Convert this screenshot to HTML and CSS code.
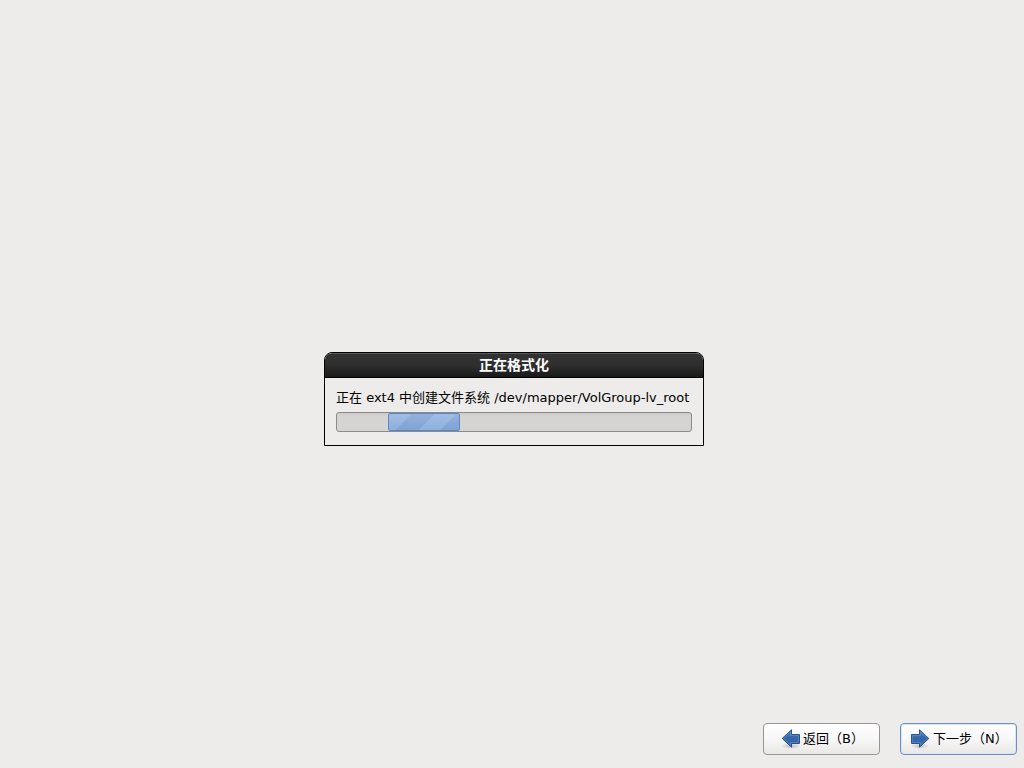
FILE: index.html
```html
<!DOCTYPE html>
<html lang="zh-CN">
<head>
<meta charset="utf-8">
<meta name="viewport" content="width=device-width, initial-scale=1">
<title>正在格式化</title>
<link rel="stylesheet" href="styles.css">
</head>
<body>
<main class="stage">
  <section class="dialog" role="dialog" aria-labelledby="dialog-title">
    <h1 class="dialog-title" id="dialog-title">正在格式化</h1>
    <div class="dialog-body">
      <p class="message" id="message">正在 ext4 中创建文件系统 /dev/mapper/VolGroup-lv_root</p>
      <div class="progress" role="progressbar" aria-labelledby="message"><div class="progress-block"></div></div>
    </div>
  </section>
</main>
<footer class="actions">
  <button class="button button-back" type="button">
    <svg class="icon" viewBox="0 0 20 20" aria-hidden="true">
      <defs>
        <linearGradient id="arrow-fill" x1="0" y1="0" x2="0" y2="1"><stop offset="0" stop-color="#5585bf"/><stop offset=".5" stop-color="#3465a4"/><stop offset="1" stop-color="#3c70b0"/></linearGradient>
        <radialGradient id="shadow"><stop offset="0" stop-color="#000" stop-opacity=".22"/><stop offset="1" stop-color="#000" stop-opacity="0"/></radialGradient>
      </defs>
      <ellipse cx="10" cy="17" rx="10" ry="3" fill="url(#shadow)"/>
      <path d="M1.200 9.500 10.500.800V5.500H18.500V14.500H10.500V18.200Z" fill="url(#arrow-fill)" stroke="#2a548f"/>
      <path d="M2.700 9.500 9.500 3.200V6.500H17.500V13.500H9.500V15.800Z" fill="none" stroke="#8db3de" stroke-opacity=".3"/>
    </svg>
    <span>返回（B）</span>
  </button>
  <button class="button button-next" type="button">
    <svg class="icon" viewBox="0 0 20 20" aria-hidden="true">
      <ellipse cx="9" cy="17" rx="9" ry="3" fill="url(#shadow)"/>
      <path d="M17.800 9.500 8.500.800V5.500H.500V14.500H8.500V18.200Z" fill="url(#arrow-fill)" stroke="#2a548f"/>
      <path d="M16.300 9.500 9.500 3.200V6.500H1.500V13.500H9.500V15.800Z" fill="none" stroke="#8db3de" stroke-opacity=".3"/>
    </svg>
    <span>下一步（N）</span>
  </button>
</footer>
</body>
</html>
```
FILE: styles.css
```css
* { box-sizing: border-box; }

body {
  margin: 0;
  min-height: 100vh;
  display: flex;
  flex-direction: column;
  background: #edeceb;
  color: #000;
  font: 13px/16px "DejaVu Sans", "Noto Sans CJK SC", sans-serif;
}

.stage {
  flex: 1;
  display: flex;
  align-items: center;
  justify-content: center;
  padding: 75px 0 0 4px;
}

.dialog {
  min-width: 380px;
  border: 1px solid #000;
  border-radius: 8px 8px 0 0;
  background: #edeceb;
  overflow: hidden;
}

.dialog-title {
  margin: 0;
  padding: 3px 0 4px;
  border-top: 1px solid #575757;
  border-bottom: 1px solid #000;
  background: linear-gradient(#333, #2e2e2e 50%, #191919);
  color: #fff;
  font-size: 14px;
  line-height: 16px;
  text-align: center;
}

.dialog-body { padding: 12px 11px 13px; }

.message {
  margin: 0 0 6px;
  white-space: nowrap;
}

.progress {
  height: 20px;
  padding-left: 51px;
  border: 1px solid #8b8a88;
  border-radius: 3px;
  background: linear-gradient(#cbcac8, #d5d4d2 3px);
}

.progress-block {
  width: 72px;
  height: 100%;
  border: 1px solid #5c87c0;
  border-radius: 2px;
  background:
    linear-gradient(rgba(255, 255, 255, .16), rgba(255, 255, 255, 0)),
    repeating-linear-gradient(135deg, #8eb0df 0 16px, #7fa3d5 16px 32px);
}

.actions {
  display: flex;
  justify-content: flex-end;
  gap: 20px;
  padding: 0 7px 13px;
}

.button {
  display: flex;
  align-items: center;
  width: 117px;
  height: 32px;
  gap: 2px;
  border: 1px solid #979694;
  border-radius: 4px;
  padding: 0 0 0 17px;
  background: linear-gradient(#fff, #f8f7f7 50%, #e9e8e6);
  color: #000;
  font: inherit;
  white-space: nowrap;
}

.button-next {
  padding-left: 10px;
  border-color: #6b90c2;
  box-shadow: inset 0 0 0 1px #dbe5f2;
}

.icon { width: 20px; height: 20px; flex: none; }
```
